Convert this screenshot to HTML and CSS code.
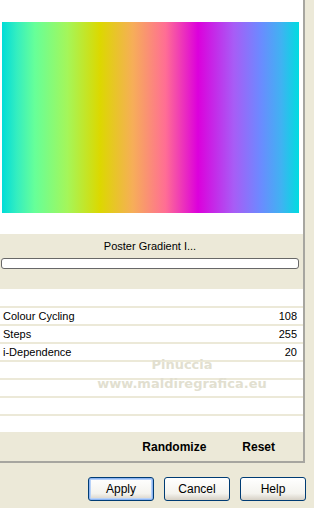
FILE: index.html
```html
<!DOCTYPE html>
<html lang="en">
  <head>
    <meta charset="UTF-8" />
    <title>Poster Gradient</title>
    <link rel="stylesheet" href="styles.css">
  </head>
  <body>
    <div class="panel">
      <div class="top"></div>
      <div class="preview"></div>
      <div class="gap"></div>
      <div class="status">
        <div class="status-text">Poster Gradient I...</div>
        <div class="progress"></div>
      </div>
      <div class="gap small"></div>
      <div class="params">
        <div class="row"><span>Colour Cycling</span><span>108</span></div>
        <div class="row"><span>Steps</span><span>255</span></div>
        <div class="row"><span>i-Dependence</span><span>20</span></div>
        <div class="row"></div>
        <div class="row"></div>
        <div class="row"></div>
        <div class="row"></div>
        <div class="mark">Pinuccia<br>www.maldiregrafica.eu</div>
      </div>
      <div class="footer">
        <span class="link">Randomize</span>
        <span class="link">Reset</span>
      </div>
    </div>
    <div class="buttons">
      <button class="btn default">Apply</button>
      <button class="btn">Cancel</button>
      <button class="btn">Help</button>
    </div>
  </body>
</html>
```

FILE: styles.css
```css
body {
  margin: 0;
  background-color: #ece9d8;
  font-family: "Liberation Sans", Arial, sans-serif;
  font-size: 11px;
  color: #000;
  width: 314px;
  height: 508px;
  overflow: hidden;
}
.panel {
  width: 303px;
  background-color: #fff;
  border-right: 2px solid #a7a6a0;
  border-bottom: 2px solid #a7a6a0;
}
.top {
  height: 22px;
}
.preview {
  height: 191px;
  margin: 0 4px 0 2px;
  background: linear-gradient(to right,
    #00dcd8 0%, #34eec0 5%, #66ff99 11%, #a4f65a 22%, #dcd800 33%,
    #f6ae58 44%, #ff6e94 55%, #dc00dc 66%, #a85cf6 78%, #6c8aff 87%,
    #40b2f2 94%, #00dce0 100%);
}
.gap {
  height: 21px;
}
.gap.small {
  height: 17px;
}
.status {
  height: 55px;
  background-color: #ece9d8;
  padding-top: 5px;
  box-sizing: border-box;
}
.status-text {
  text-align: center;
  font-size: 11px;
  line-height: 14px;
  padding-right: 3px;
}
.progress {
  height: 11px;
  margin: 5px 4px 0 1px;
  background-color: #fff;
  border: 1px solid #686868;
  border-radius: 3px;
  box-sizing: border-box;
}
.params {
  position: relative;
}
.row {
  height: 18px;
  border-top: 2px solid #ece9d8;
  box-sizing: border-box;
  display: flex;
  justify-content: space-between;
  align-items: center;
  padding: 0 6px 0 3px;
  font-size: 11px;
}
.mark {
  position: absolute;
  left: 84px;
  top: 49px;
  width: 196px;
  text-align: center;
  font-family: "DejaVu Sans", sans-serif;
  font-size: 13px;
  font-weight: bold;
  line-height: 19px;
  color: #e2dfd0;
}
.footer {
  height: 29px;
  background-color: #ece9d8;
  display: flex;
  justify-content: flex-end;
  align-items: center;
  gap: 36px;
  padding-right: 28px;
  font-size: 12px;
  font-weight: bold;
}
.buttons {
  display: flex;
  justify-content: flex-end;
  gap: 10px;
  margin-top: 14px;
  padding-right: 8px;
}
.btn {
  width: 66px;
  height: 24px;
  border: 1px solid #003c74;
  border-radius: 3px;
  background: linear-gradient(#ffffff, #f4f3ee 70%, #d6d0c5);
  font-family: "Liberation Sans", Arial, sans-serif;
  font-size: 12px;
  color: #000;
  padding: 0;
}
.btn.default {
  box-shadow: inset 0 0 0 1px #8cb4f2, inset 0 0 0 2px #b8d2f8;
}
```
